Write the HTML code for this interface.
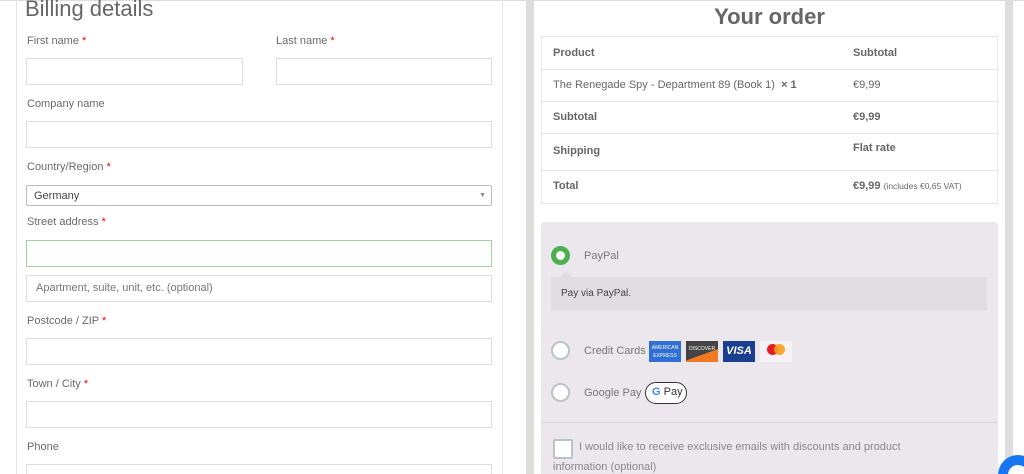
<!DOCTYPE html>
<html><head><meta charset="utf-8"><style>
*{box-sizing:border-box;margin:0;padding:0}
html,body{width:1024px;height:474px;overflow:hidden}
body{background:#fff;font-family:"Liberation Sans",sans-serif;color:#666;position:relative}
.a{position:absolute}
.topline{left:0;top:0;width:1024px;height:1px;background:#ddd}
.lp{left:16px;top:-2px;width:487px;height:480px;border:1px solid #e6e6e6;border-top:none}
h1{position:absolute;left:25px;top:-4px;font-size:22px;font-weight:normal;color:#666}
.lb{position:absolute;font-size:11px;color:#6a6a6a}
.lb b{color:#e00;font-weight:normal}
.in{position:absolute;height:27px;border:1px solid #ddd;background:#fff}
.rs1{left:526px;top:0;width:8px;height:474px;background:#ddd}
.rs2{left:1005px;top:0;width:8px;height:474px;background:#ddd}
.yo{left:534px;width:471px;top:4px;text-align:center;font-size:22px;font-weight:bold;color:#666}
.tb{left:541px;top:36px;width:457px;height:168px;border:1px solid #e8e8e8}
.row{position:absolute;left:0;width:455px;border-bottom:1px solid #e8e8e8;font-size:11px}
.row span{position:absolute}
.pb{left:541px;top:222px;width:457px;height:252px;background:#ebe7ec;border-radius:3px 3px 0 0}
.radio{position:absolute;width:19px;height:19px;border-radius:50%;border:2px solid #b7c4c8;background:#fff}
.pt{position:absolute;font-size:11px;color:#777}
</style></head><body>
<div class="a topline"></div>
<div class="a lp"></div>
<h1>Billing details</h1>
<div class="lb" style="left:27px;top:35px">First name <b>*</b></div>
<div class="lb" style="left:276px;top:35px">Last name <b>*</b></div>
<div class="in" style="left:26px;top:58px;width:217px"></div>
<div class="in" style="left:276px;top:58px;width:216px"></div>
<div class="lb" style="left:27px;top:98px">Company name</div>
<div class="in" style="left:26px;top:121px;width:466px"></div>
<div class="lb" style="left:27px;top:161px">Country/Region <b>*</b></div>
<div class="in" style="left:26px;top:185px;width:466px;height:21px;border-color:#bbb;border-radius:2px;font-size:11px;color:#444;padding:4px 7px">Germany<span style="position:absolute;right:5px;top:6px;font-size:7px;color:#888">▼</span></div>
<div class="lb" style="left:27px;top:216px">Street address <b>*</b></div>
<div class="in" style="left:26px;top:240px;width:466px;border-color:#9fd49f"></div>
<div class="in" style="left:26px;top:275px;width:466px;font-size:11px;color:#777;padding:6px 9px">Apartment, suite, unit, etc. (optional)</div>
<div class="lb" style="left:27px;top:315px">Postcode / ZIP <b>*</b></div>
<div class="in" style="left:26px;top:338px;width:466px"></div>
<div class="lb" style="left:27px;top:378px">Town / City <b>*</b></div>
<div class="in" style="left:26px;top:401px;width:466px"></div>
<div class="lb" style="left:27px;top:441px">Phone</div>
<div class="in" style="left:26px;top:464px;width:466px"></div>

<div class="a rs1"></div><div class="a rs2"></div>
<div class="a yo">Your order</div>
<div class="a tb">
 <div class="row" style="top:0;height:33px;font-weight:bold"><span style="left:11px;top:10px">Product</span><span style="left:311px;top:10px">Subtotal</span></div>
 <div class="row" style="top:33px;height:32px"><span style="left:11px;top:9px">The Renegade Spy - Department 89 (Book 1) &nbsp;<b>× 1</b></span><span style="left:311px;top:9px">€9,99</span></div>
 <div class="row" style="top:65px;height:32px;font-weight:bold"><span style="left:11px;top:9px">Subtotal</span><span style="left:311px;top:9px">€9,99</span></div>
 <div class="row" style="top:97px;height:37px;font-weight:bold"><span style="left:11px;top:11px">Shipping</span><span style="left:311px;top:8px">Flat rate</span></div>
 <div class="row" style="top:134px;height:33px;border:none"><span style="left:11px;top:9px;font-weight:bold">Total</span><span style="left:311px;top:9px"><b>€9,99</b> <small style="font-size:8.5px">(includes €0,65 VAT)</small></span></div>
</div>
<div class="a pb">
 <div class="radio" style="left:10px;top:24px;border:5px solid #4caf50"></div>
 <div class="pt" style="left:43px;top:28px">PayPal</div>
 <div class="a" style="left:10px;top:55px;width:436px;height:34px;background:#e0dde0;font-size:10px;color:#444;padding:11px 10px">Pay via PayPal.</div>
 <div class="a" style="left:19px;top:49px;width:0;height:0;border:6px solid transparent;border-bottom-color:#e0dde0;border-top:none"></div>
 <div class="radio" style="left:10px;top:119px"></div>
 <div class="pt" style="left:43px;top:123px">Credit Cards</div>
 <div class="a" style="left:108px;top:119px;width:32px;height:21px;background:#2f6fd6;color:#fff;font-size:5px;text-align:center;line-height:8px;padding-top:3px">AMERICAN<br>EXPRESS</div>
 <div class="a" style="left:145px;top:119px;width:32px;height:21px;background:linear-gradient(160deg,#444 60%,#f07a22 60%);color:#fff;font-size:5px;text-align:center;line-height:16px">DISCOVER</div>
 <div class="a" style="left:182px;top:119px;width:32px;height:21px;background:#1a3f8f;color:#fff;font-size:11px;font-weight:bold;font-style:italic;text-align:center;line-height:21px">VISA</div>
 <div class="a" style="left:219px;top:119px;width:32px;height:21px;background:#f4f2f4">
  <div class="a" style="left:7px;top:3px;width:11px;height:11px;border-radius:50%;background:#e61c24"></div>
  <div class="a" style="left:14px;top:3px;width:11px;height:11px;border-radius:50%;background:#f99f1b;opacity:.9"></div></div>
 <div class="radio" style="left:10px;top:161px"></div>
 <div class="pt" style="left:43px;top:165px">Google Pay</div>
 <div class="a" style="left:104px;top:160px;width:42px;height:22px;border:1.5px solid #333;border-radius:11px;background:#fff;font-size:11px;color:#333;padding:3px 0 0 6px"><b style="color:#4285f4">G</b> Pay</div>
 <div class="a" style="left:0;top:200px;width:457px;height:1px;background:#d8d4d8"></div>
 <div class="a" style="left:12px;top:217px;width:20px;height:20px;border:2px solid #b7c4c8;background:#fff;border-radius:2px"></div>
 <div class="pt" style="left:38px;top:219px;color:#888">I would like to receive exclusive emails with discounts and product</div>
 <div class="pt" style="left:12px;top:239px;color:#888">information (optional)</div>
</div>
<div class="a" style="left:998px;top:455px;width:40px;height:40px;border-radius:50%;background:#1976f2"></div>
<div class="a" style="left:1008px;top:465px;width:20px;height:20px;border-radius:50%;background:#fff"></div>
</body></html>
